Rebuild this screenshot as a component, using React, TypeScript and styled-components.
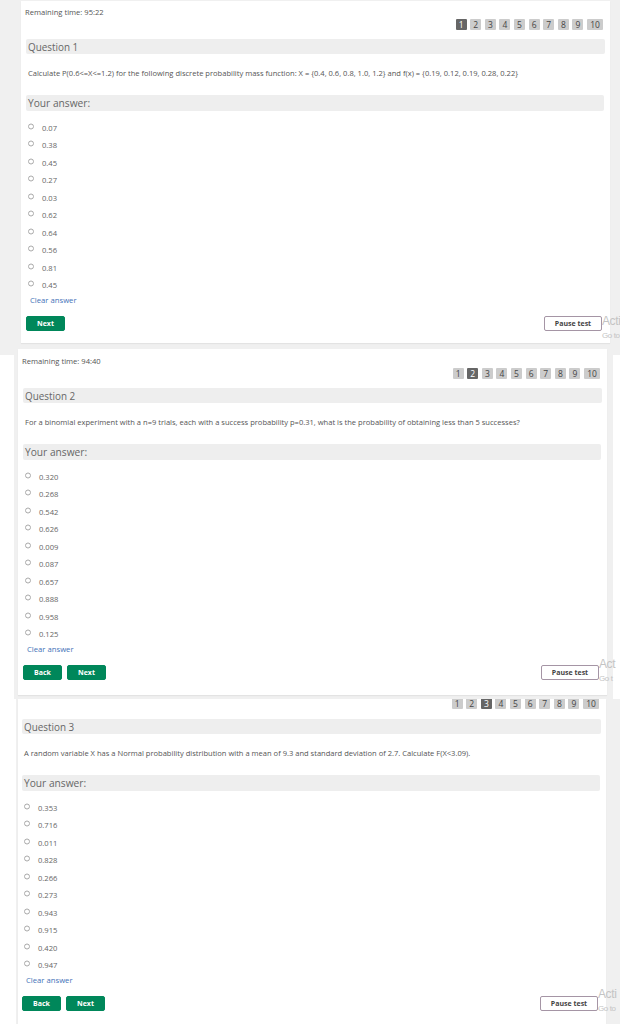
import { FC } from 'react'
import styled, { createGlobalStyle } from 'styled-components'

const GlobalStyle = createGlobalStyle`
  html, body {
    margin: 0;
    padding: 0;
    background: #fff;
    font-family: "Open Sans", "Liberation Sans", sans-serif;
  }
`

const Page = styled.div`
  width: 620px;
  height: 1024px;
  overflow: hidden;
`

const Slice = styled.section<{ $height: number; $kind: 'first' | 'second' | 'third' }>`
  position: relative;
  box-sizing: border-box;
  height: ${(p) => p.$height}px;
  overflow: hidden;
  display: flex;
  align-items: flex-start;
  background-color: #f0f0f0;
  padding: ${(p) =>
    p.$kind === 'first' ? '1px 10px 0 21px' : p.$kind === 'second' ? '0 13px 0 18px' : '0 14px 0 18px'};
  ${(p) =>
    p.$kind === 'second' &&
    `background-image: linear-gradient(#fff, #fff), linear-gradient(#fff, #fff);
     background-size: 14px 100%, 7px 100%;
     background-position: 0 6px, 613px 6px;
     background-repeat: no-repeat;`}
  ${(p) =>
    p.$kind === 'third' &&
    `background-image: linear-gradient(#fff, #fff);
     background-size: 16px 100%;
     background-repeat: no-repeat;`}
`

const Panel = styled.div<{ $height: number; $top: number; $left: number }>`
  box-sizing: border-box;
  flex: 1;
  height: ${(p) => p.$height}px;
  overflow: hidden;
  background: #fff;
  padding: ${(p) => p.$top}px 5px 0 ${(p) => p.$left}px;
  box-shadow: 0 1px 1px rgba(0, 0, 0, 0.05);
`

const Timer = styled.div`
  height: 13px;
  margin-left: -1px;
  font-size: 7.6px;
  line-height: 14px;
  color: #555;
`

const Pager = styled.div<{ $cut?: boolean }>`
  display: flex;
  justify-content: flex-end;
  gap: 3.6px;
  height: ${(p) => (p.$cut ? 10 : 11)}px;
  margin: 1px 2px 9px 0;
  ${(p) => p.$cut && 'margin-top: 0; margin-bottom: 10px; align-items: flex-end;'}
`

const PageBox = styled.span<{ $active?: boolean; $wide?: boolean }>`
  width: ${(p) => (p.$wide ? 16 : 11)}px;
  height: 11px;
  flex: none;
  border-radius: 1px;
  background: ${(p) => (p.$active ? '#666' : '#ccc')};
  color: ${(p) => (p.$active ? '#fff' : '#444')};
  font-size: 8.5px;
  line-height: 11px;
  text-align: center;
`

const Bar = styled.div<{ $answer?: boolean }>`
  box-sizing: border-box;
  height: ${(p) => (p.$answer ? 16 : 15)}px;
  margin-right: ${(p) => (p.$answer ? 1 : 0)}px;
  padding-left: 2px;
  border-radius: 2px;
  background: #eee;
  color: #666;
  font-size: ${(p) => (p.$answer ? 10.2 : 9.9)}px;
  line-height: 16px;
`

const Prompt = styled.p`
  height: 14px;
  margin: 12px 0 15px;
  padding-left: 2px;
  color: #555;
  font-size: 7.56px;
  line-height: 14px;
  white-space: nowrap;
`

const Options = styled.ul`
  list-style: none;
  margin: 8px 0 0;
  padding: 0 0 0 2px;
`

const Option = styled.li`
  display: flex;
  align-items: center;
  gap: 8px;
  height: 17.5px;
  color: #666;
  font-size: 7.6px;
`

const Radio = styled.span`
  box-sizing: border-box;
  width: 6px;
  height: 6px;
  flex: none;
  border: 1px solid #aaa;
  border-radius: 50%;
  transform: translateY(-1.5px);
`

const ClearLink = styled.a`
  display: block;
  height: 13px;
  padding-left: 4px;
  color: #3f72b8;
  font-size: 7.7px;
  line-height: 13px;
`

const Actions = styled.div`
  display: flex;
  align-items: center;
  gap: 5px;
  margin: 9px 3px 0 0;
`

const Button = styled.button<{ $outline?: boolean }>`
  box-sizing: border-box;
  height: 15px;
  width: ${(p) => (p.$outline ? 58 : 39)}px;
  margin-left: ${(p) => (p.$outline ? 'auto' : 0)};
  padding: 0;
  border: 1px solid ${(p) => (p.$outline ? '#a595a5' : '#00875a')};
  border-radius: 2px;
  background: ${(p) => (p.$outline ? '#fff' : '#00875a')};
  color: ${(p) => (p.$outline ? '#444' : '#fff')};
  font-family: inherit;
  font-size: 7px;
  font-weight: 700;
  line-height: 13px;
`

const Watermark = styled.div<{ $left: number; $bottom: number }>`
  position: absolute;
  left: ${(p) => p.$left}px;
  bottom: ${(p) => p.$bottom}px;
  color: #c4c4c4;
  white-space: nowrap;
  font-family: "Liberation Sans", sans-serif;
`

const WatermarkTitle = styled.div`
  font-size: 12px;
  letter-spacing: -0.4px;
  line-height: 18px;
`

const WatermarkHint = styled.div`
  font-size: 8px;
  letter-spacing: -0.4px;
  line-height: 11px;
`

type Question = {
  number: number
  timer?: string
  prompt: string
  options: string[]
  back: boolean
}

const questions: Question[] = [
  {
    number: 1,
    timer: 'Remaining time: 95:22',
    prompt:
      'Calculate P(0.6<=X<=1.2) for the following discrete probability mass function: X = {0.4, 0.6, 0.8, 1.0, 1.2} and f(x) = {0.19, 0.12, 0.19, 0.28, 0.22}',
    options: ['0.07', '0.38', '0.45', '0.27', '0.03', '0.62', '0.64', '0.56', '0.81', '0.45'],
    back: false,
  },
  {
    number: 2,
    timer: 'Remaining time: 94:40',
    prompt:
      'For a binomial experiment with a n=9 trials, each with a success probability p=0.31, what is the probability of obtaining less than 5 successes?',
    options: ['0.320', '0.268', '0.542', '0.626', '0.009', '0.087', '0.657', '0.888', '0.958', '0.125'],
    back: true,
  },
  {
    number: 3,
    prompt:
      'A random variable X has a Normal probability distribution with a mean of 9.3 and standard deviation of 2.7. Calculate F(X<3.09).',
    options: ['0.353', '0.716', '0.011', '0.828', '0.266', '0.273', '0.943', '0.915', '0.420', '0.947'],
    back: true,
  },
]

const QuestionBody: FC<Question> = ({ number, timer, prompt, options, back }) => (
  <>
    {timer && <Timer>{timer}</Timer>}
    <Pager $cut={!timer}>
      {Array.from({ length: 10 }, (_, i) => (
        <PageBox key={i} $active={i + 1 === number} $wide={i === 9}>
          {i + 1}
        </PageBox>
      ))}
    </Pager>
    <Bar>Question {number}</Bar>
    <Prompt>{prompt}</Prompt>
    <Bar $answer>Your answer:</Bar>
    <Options>
      {options.map((option, i) => (
        <Option key={i}>
          <Radio />
          {option}
        </Option>
      ))}
    </Options>
    <ClearLink>Clear answer</ClearLink>
    <Actions>
      {back && <Button>Back</Button>}
      <Button>Next</Button>
      <Button $outline>Pause test</Button>
    </Actions>
  </>
)

export default function App() {
  const [first, second, third] = questions
  return (
    <Page>
      <GlobalStyle />
      <Slice $kind="first" $height={349}>
        <Panel $height={342} $top={4} $left={5}>
          <QuestionBody {...first} />
        </Panel>
        <Watermark $left={602} $bottom={8}>
          <WatermarkTitle>Acti</WatermarkTitle>
          <WatermarkHint>Go to</WatermarkHint>
        </Watermark>
      </Slice>
      <Slice $kind="second" $height={350}>
        <Panel $height={346} $top={5} $left={5}>
          <QuestionBody {...second} />
        </Panel>
        <Watermark $left={599} $bottom={15}>
          <WatermarkTitle>Act</WatermarkTitle>
          <WatermarkHint>Go t</WatermarkHint>
        </Watermark>
      </Slice>
      <Slice $kind="third" $height={325}>
        <Panel $height={325} $top={0} $left={4}>
          <QuestionBody {...third} />
        </Panel>
        <Watermark $left={598} $bottom={10}>
          <WatermarkTitle>Acti</WatermarkTitle>
          <WatermarkHint>Go to</WatermarkHint>
        </Watermark>
      </Slice>
    </Page>
  )
}
